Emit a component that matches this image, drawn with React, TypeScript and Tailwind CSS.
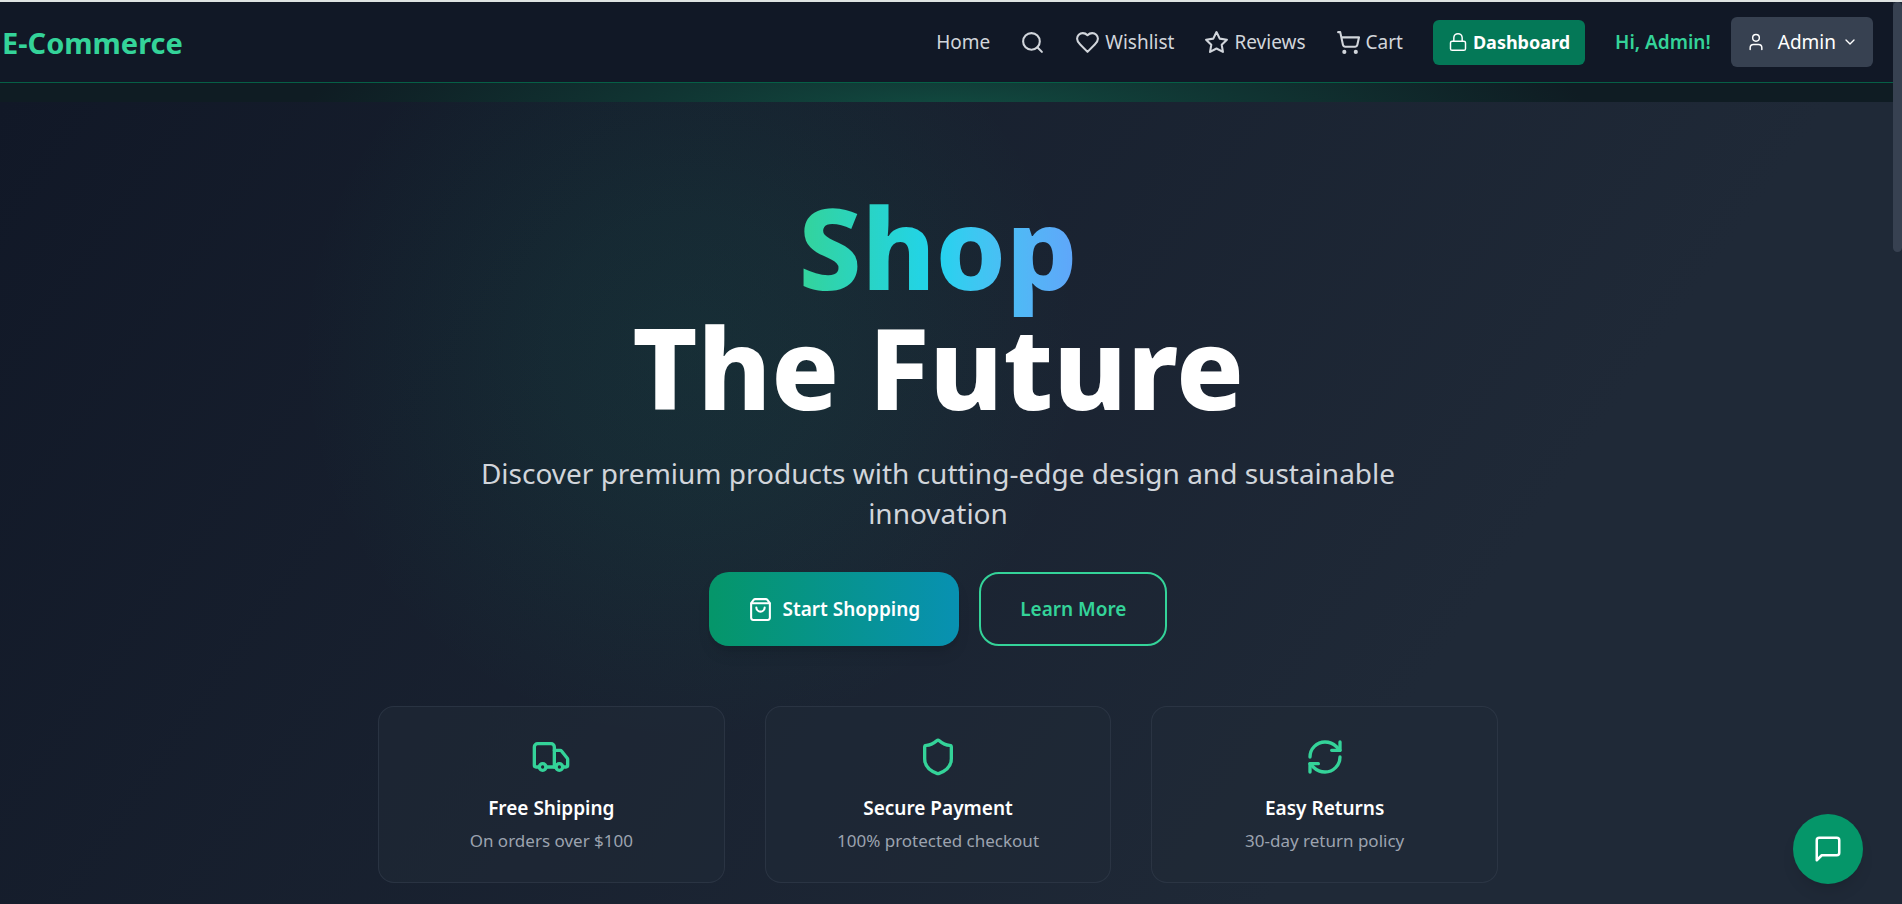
import type { ReactNode } from "react";
import {
  ChevronDown,
  Lock,
  RefreshCw,
  Search,
  Shield,
  ShoppingBag,
  ShoppingCart,
  Truck,
  User,
} from "lucide-react";

function Stroke({ className, children }: { className: string; children: ReactNode }) {
  return (
    <svg
      viewBox="0 0 24 24"
      fill="none"
      stroke="currentColor"
      strokeWidth={2}
      strokeLinecap="round"
      strokeLinejoin="round"
      aria-hidden="true"
      className={className}
    >
      {children}
    </svg>
  );
}

function HeartIcon() {
  return (
    <Stroke className="size-[25px]">
      <path d="M19 14c1.49-1.46 3-3.21 3-5.5A5.5 5.5 0 0 0 16.5 3c-1.76 0-3 .5-4.5 2-1.5-1.5-2.74-2-4.5-2A5.5 5.5 0 0 0 2 8.5c0 2.3 1.5 4.05 3 5.5l7 7Z" />
    </Stroke>
  );
}

function StarIcon() {
  return (
    <Stroke className="size-[25px]">
      <polygon points="12 2 15.09 8.26 22 9.27 17 14.14 18.18 21.02 12 17.77 5.82 21.02 7 14.14 2 9.27 8.91 8.26 12 2" />
    </Stroke>
  );
}

function ChatIcon() {
  return (
    <Stroke className="size-[30px]">
      <path d="M21 15a2 2 0 0 1-2 2H7l-4 4V5a2 2 0 0 1 2-2h14a2 2 0 0 1 2 2z" />
    </Stroke>
  );
}

const navLink = "flex items-center gap-[5px] hover:text-[#34d399]";

function Header() {
  return (
    <header className="border-b border-[#065f46] bg-[#111826]">
      <div className="flex h-20 items-center justify-between pr-5 pl-[2px]">
        <a href="#" className="pt-[2px] text-[29px] font-bold text-[#34d399]">
          E-Commerce
        </a>
        <nav className="flex items-center gap-[30px] text-[19px] text-[#d1d5db]">
          <a href="#home" className={navLink}>
            Home
          </a>
          <button type="button" aria-label="Search" className="hover:text-[#34d399]">
            <Search className="size-[25px]" />
          </button>
          <a href="#wishlist" className={navLink}>
            <HeartIcon />
            Wishlist
          </a>
          <a href="#reviews" className={navLink}>
            <StarIcon />
            Reviews
          </a>
          <a href="#cart" className={navLink}>
            <ShoppingCart className="size-[25px]" />
            Cart
          </a>
          <a
            href="#dashboard"
            className="flex h-[45px] items-center gap-[5px] rounded-md bg-[#047857] px-[15px] text-[18px] font-bold text-white"
          >
            <Lock className="size-5" strokeWidth={1.75} />
            Dashboard
          </a>
          <div className="flex items-center gap-5">
            <span className="font-semibold text-[#34d399]">Hi, Admin!</span>
            <button
              type="button"
              aria-haspopup="menu"
              className="flex h-[50px] items-center rounded-md bg-[#374151] px-[15px] text-white"
            >
              <User className="mr-3 size-5" strokeWidth={1.75} />
              Admin
              <ChevronDown className="ml-[6px] size-4" />
            </button>
          </div>
        </nav>
      </div>
    </header>
  );
}

const features = [
  { icon: Truck, title: "Free Shipping", text: "On orders over $100" },
  { icon: Shield, title: "Secure Payment", text: "100% protected checkout" },
  { icon: RefreshCw, title: "Easy Returns", text: "30-day return policy" },
];

function Hero() {
  return (
    <main className="flex-1 bg-[radial-gradient(circle_at_690px_250px,rgba(16,185,129,0.09),rgba(16,185,129,0.07)_140px,transparent_390px),linear-gradient(125deg,#111827,#1f2937_1500px)] pr-[17px] pt-[85px] pb-5 text-center">
      <h1 className="text-[112px] leading-[120px] font-extrabold text-white">
        <span className="-mb-5 inline-block bg-linear-to-r from-[#34d399] via-[#22d3ee] to-[#60a5fa] bg-clip-text pb-5 align-top text-transparent">
          Shop
        </span>
        <span className="block">The Future</span>
      </h1>
      <p className="mx-auto mt-[26px] max-w-[960px] text-[28px] leading-10 text-[#d1d5db]">
        Discover premium products with cutting-edge design and sustainable innovation
      </p>
      <div className="mt-[39px] flex justify-center gap-5 text-[19px] font-semibold">
        <button
          type="button"
          className="flex h-[74px] items-center gap-[10px] rounded-[20px] bg-linear-to-r/srgb from-[#059669] to-[#0891b2] px-[39px] text-white shadow-lg"
        >
          <ShoppingBag className="size-[25px]" />
          Start Shopping
        </button>
        <button
          type="button"
          className="h-[74px] rounded-[20px] border-2 border-[#34d399] px-[39px] text-[#34d399]"
        >
          Learn More
        </button>
      </div>
      <ul className="mx-auto mt-[60px] grid max-w-[1120px] grid-cols-3 gap-10">
        {features.map(({ icon: Icon, title, text }) => (
          <li
            key={title}
            className="rounded-2xl border border-[#374151]/50 bg-[#1f2937]/60 px-[30px] pt-[30px] pb-[29px]"
          >
            <Icon className="mx-auto size-10 text-[#34d399]" />
            <h2 className="mt-4 text-[19px] leading-[30px] font-semibold text-white">{title}</h2>
            <p className="mt-[5px] text-[17px] leading-[25px] text-[#9ca3af]">{text}</p>
          </li>
        ))}
      </ul>
    </main>
  );
}

export default function App() {
  return (
    <div className="flex min-h-screen border-t-2 border-[#dfe3e2] bg-[#1f2937] font-['Noto_Sans','Segoe_UI',sans-serif]">
      <div className="flex min-w-0 flex-1 flex-col">
        <Header />
        <div className="h-[19px] bg-[radial-gradient(ellipse_640px_90px_at_50%_130%,#114a40,#0f1c23)]" />
        <Hero />
      </div>
      <div className="w-[9px] bg-[#1f2937]">
        <div className="h-[250px] rounded-md bg-[#374151]" />
      </div>
      <button
        type="button"
        aria-label="Open chat"
        className="fixed right-[39px] bottom-5 flex size-[70px] items-center justify-center rounded-full bg-[#059669] text-white shadow-lg"
      >
        <ChatIcon />
      </button>
    </div>
  );
}
